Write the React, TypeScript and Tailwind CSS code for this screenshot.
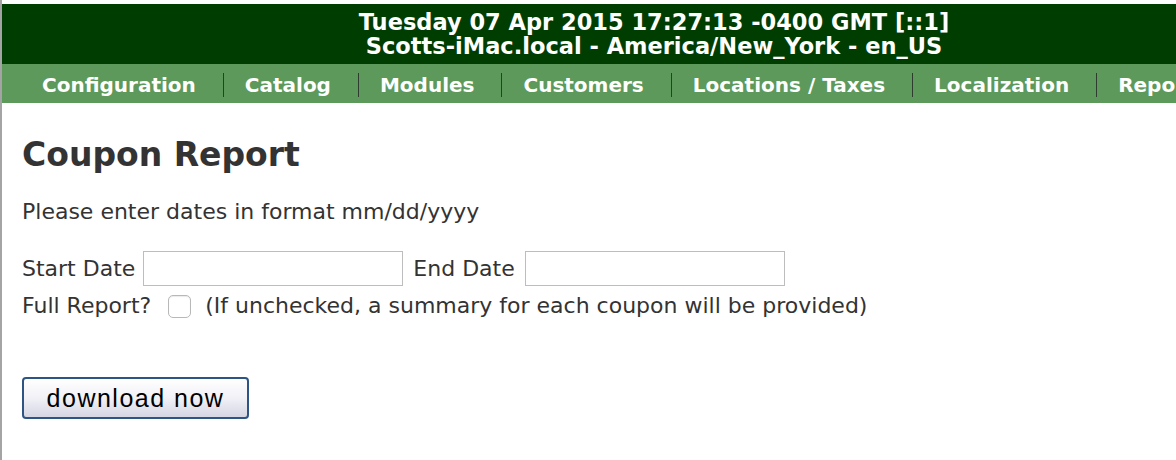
import React from 'react';

const navItems = ['Configuration', 'Catalog', 'Modules', 'Customers', 'Locations / Taxes', 'Localization', 'Reports'];

export default function App() {
  return (
    <div className="w-[1176px] h-[460px] overflow-hidden bg-white border-l-2 border-[#a4a4a4] font-['DejaVu_Sans',Verdana,sans-serif]">
      <div className="w-[1400px] pt-[4px]">
        {/* Server info banner */}
        <div className="w-[1304px] h-[60px] bg-[#003d00] flex flex-col items-center justify-center text-white font-bold text-[22.5px] leading-[24px]">
          <div>Tuesday 07 Apr 2015 17:27:13 -0400 GMT [::1]</div>
          <div>Scotts-iMac.local - America/New_York - en_US</div>
        </div>

        {/* Menu */}
        <div className="w-[1304px] h-[39px] bg-[#5c995b] flex items-center pl-[40px] pt-[3px] text-white font-bold text-[20px]">
          {navItems.map((item, i) => (
            <div key={item} className="flex items-center">
              {i > 0 && <span className="w-[1px] h-[24px] bg-[#2e3b2e] mr-[21px]" />}
              <span className="mr-[27px] whitespace-nowrap">{item}</span>
            </div>
          ))}
        </div>
      </div>

      {/* Content */}
      <div className="w-[1174px] px-[20px] text-[#333333]">
        <h1 className="mt-[32px] text-[33px] font-bold leading-[40px]">Coupon Report</h1>
        <p className="mt-[24px] text-[22px] leading-[26px]">Please enter dates in format mm/dd/yyyy</p>

        <div className="mt-[26px] flex items-center text-[22px] leading-[26px]">
          <span>Start Date</span>
          <input type="text" className="ml-[8px] w-[260px] h-[35px] border border-[#bdbdbd] outline-none" />
          <span className="ml-[10px]">End Date</span>
          <input type="text" className="ml-[10px] w-[260px] h-[35px] border border-[#bdbdbd] outline-none" />
        </div>

        <div className="mt-[7px] flex items-center text-[22px] leading-[26px]">
          <span>Full Report?</span>
          <span className="ml-[17px] w-[23px] h-[23px] rounded-[5px] border border-[#b8b8b8] bg-white shadow-[inset_0_1px_1px_rgba(0,0,0,0.08)]" />
          <span className="ml-[14px]">(If unchecked, a summary for each coupon will be provided)</span>
        </div>

        <button className="mt-[58px] w-[227px] h-[42px] rounded-[4px] border-2 border-[#2c5584] bg-gradient-to-b from-[#ffffff] via-[#f1f1f7] to-[#d6d6e4] text-black text-[25px] tracking-[1.5px] font-['Liberation_Sans',Arial,sans-serif] leading-none flex items-center justify-center">
          download now
        </button>
      </div>
    </div>
  );
}
